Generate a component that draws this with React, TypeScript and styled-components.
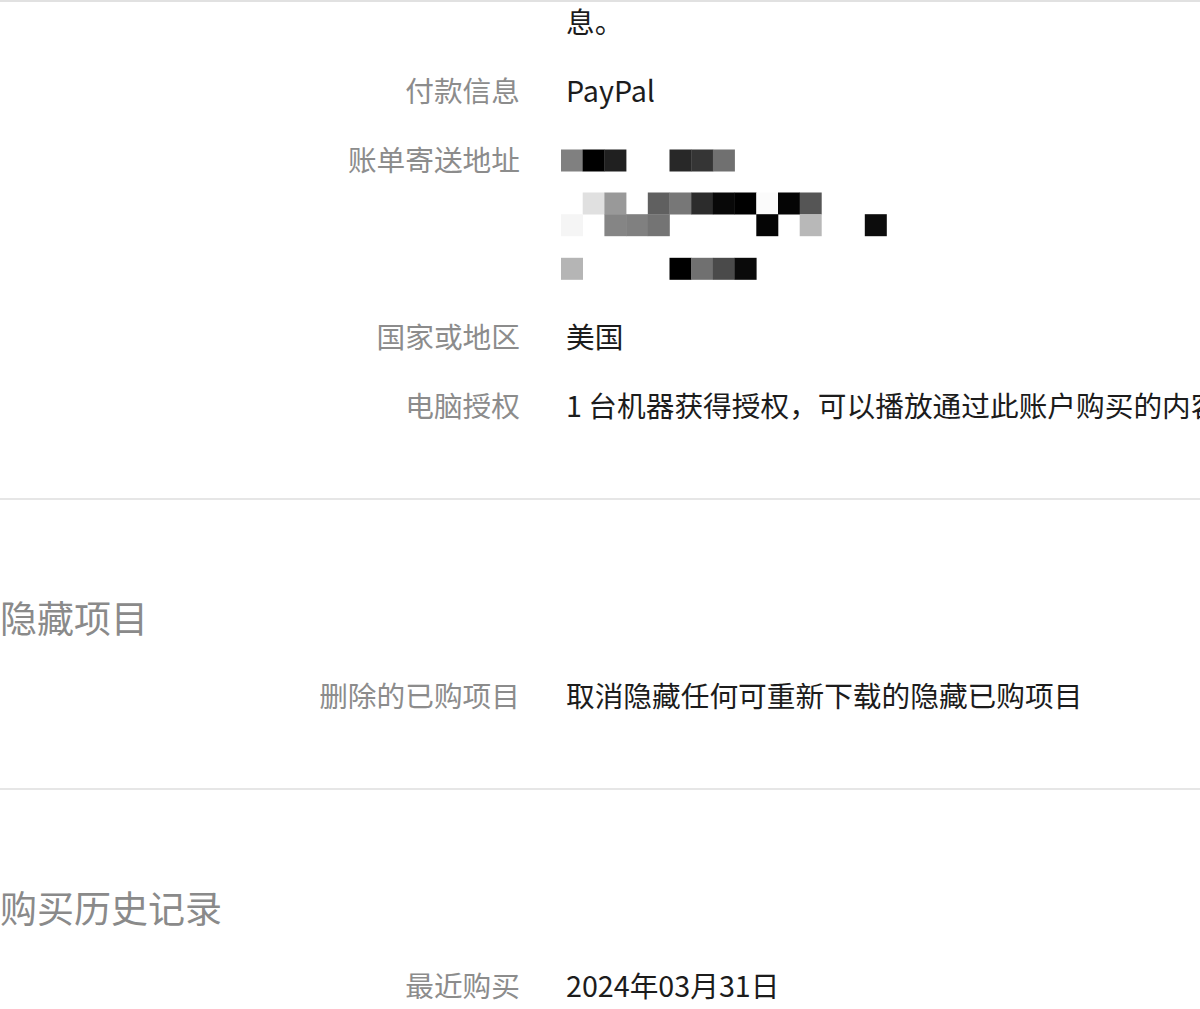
import React from 'react';
import styled, { createGlobalStyle } from 'styled-components';

const GlobalStyle = createGlobalStyle`
  html, body {
    margin: 0;
    padding: 0;
    background: #ffffff;
    overflow: hidden;
  }
  body {
    font-family: "Noto Sans CJK SC", "Noto Sans", sans-serif;
    -webkit-font-smoothing: antialiased;
  }
`;

type Cell = { col: number; row: number; color: string };

// mosaic that hides the billing address
const addressCells: Cell[] = [
  { row: 0, col: 0, color: '#808080' },
  { row: 0, col: 1, color: '#000000' },
  { row: 0, col: 2, color: '#202020' },
  { row: 0, col: 5, color: '#282828' },
  { row: 0, col: 6, color: '#353535' },
  { row: 0, col: 7, color: '#707070' },
  { row: 1, col: 1, color: '#e0e0e0' },
  { row: 1, col: 2, color: '#999999' },
  { row: 1, col: 4, color: '#606060' },
  { row: 1, col: 5, color: '#777777' },
  { row: 1, col: 6, color: '#2c2c2c' },
  { row: 1, col: 7, color: '#080808' },
  { row: 1, col: 8, color: '#000000' },
  { row: 1, col: 9, color: '#fbfbfb' },
  { row: 1, col: 10, color: '#050505' },
  { row: 1, col: 11, color: '#555555' },
  { row: 2, col: 0, color: '#f5f5f5' },
  { row: 2, col: 2, color: '#858585' },
  { row: 2, col: 3, color: '#808080' },
  { row: 2, col: 4, color: '#747474' },
  { row: 2, col: 9, color: '#050505' },
  { row: 2, col: 11, color: '#b8b8b8' },
  { row: 2, col: 14, color: '#0c0c0c' },
  { row: 3, col: 0, color: '#b5b5b5' },
  { row: 3, col: 5, color: '#000000' },
  { row: 3, col: 6, color: '#707070' },
  { row: 3, col: 7, color: '#4a4a4a' },
  { row: 3, col: 8, color: '#0a0a0a' },
];

const CELL = 21.7;
const rowTops = [17.5, 60.5, 82.2, 125.8];

const AddressMosaic: React.FC = () => (
  <MosaicSvg width={340} height={162} viewBox="0 0 340 162">
    {addressCells.map((c) => (
      <rect
        key={`${c.row}-${c.col}`}
        x={c.col * CELL}
        y={rowTops[c.row]}
        width={CELL + 0.3}
        height={CELL + 0.3}
        fill={c.color}
      />
    ))}
  </MosaicSvg>
);

interface IRowProps {
  label?: string;
  children: React.ReactNode;
}

const InfoRow: React.FC<IRowProps> = ({ label, children }) => (
  <Row>
    <Label>{label}</Label>
    <Value>{children}</Value>
  </Row>
);

const App: React.FC = () => (
  <>
    <GlobalStyle />
    <Page>
      <TopEdge />
      <Section>
        <RowList $offset={-8}>
          <InfoRow>息。</InfoRow>
          <InfoRow label="付款信息">PayPal</InfoRow>
          <InfoRow label="账单寄送地址">
            <AddressMosaic />
          </InfoRow>
          <InfoRow label="国家或地区">美国</InfoRow>
          <InfoRow label="电脑授权">
            1 台机器获得授权，可以播放通过此账户购买的内容。
          </InfoRow>
        </RowList>
      </Section>
      <Section>
        <Heading>隐藏项目</Heading>
        <RowList>
          <InfoRow label="删除的已购项目">取消隐藏任何可重新下载的隐藏已购项目</InfoRow>
        </RowList>
      </Section>
      <Section $last>
        <Heading>购买历史记录</Heading>
        <RowList>
          <InfoRow label="最近购买">2024年03月31日</InfoRow>
        </RowList>
      </Section>
    </Page>
  </>
);

const Page = styled.div`
  width: 1200px;
  height: 1009px;
  overflow: hidden;
  background: #ffffff;
`;

const TopEdge = styled.div`
  height: 2px;
  background: #e1e1e1;
  position: relative;
  z-index: 1;
`;

const Section = styled.section<{ $last?: boolean }>`
  padding-bottom: 66px;
  border-bottom: ${({ $last }) => ($last ? 'none' : '2px solid #e6e6e6')};
`;

const Heading = styled.h2`
  margin: 0;
  padding-top: 90px;
  font-size: 37px;
  line-height: 54px;
  font-weight: 400;
  color: #8a8a8a;
  white-space: nowrap;
`;

const RowList = styled.div<{ $offset?: number }>`
  display: flex;
  flex-direction: column;
  gap: 15px;
  margin-top: ${({ $offset }) => ($offset !== undefined ? `${$offset}px` : '24px')};
`;

const Row = styled.div`
  display: grid;
  grid-template-columns: 520px 1fr;
  column-gap: 46px;
  font-size: 28.7px;
  line-height: 54px;
  white-space: nowrap;
`;

const Label = styled.div`
  text-align: right;
  color: #8c8c8c;
`;

const Value = styled.div`
  color: #1c1c1c;
`;

const MosaicSvg = styled.svg`
  display: block;
  margin-left: -5px;
`;

export default App;
